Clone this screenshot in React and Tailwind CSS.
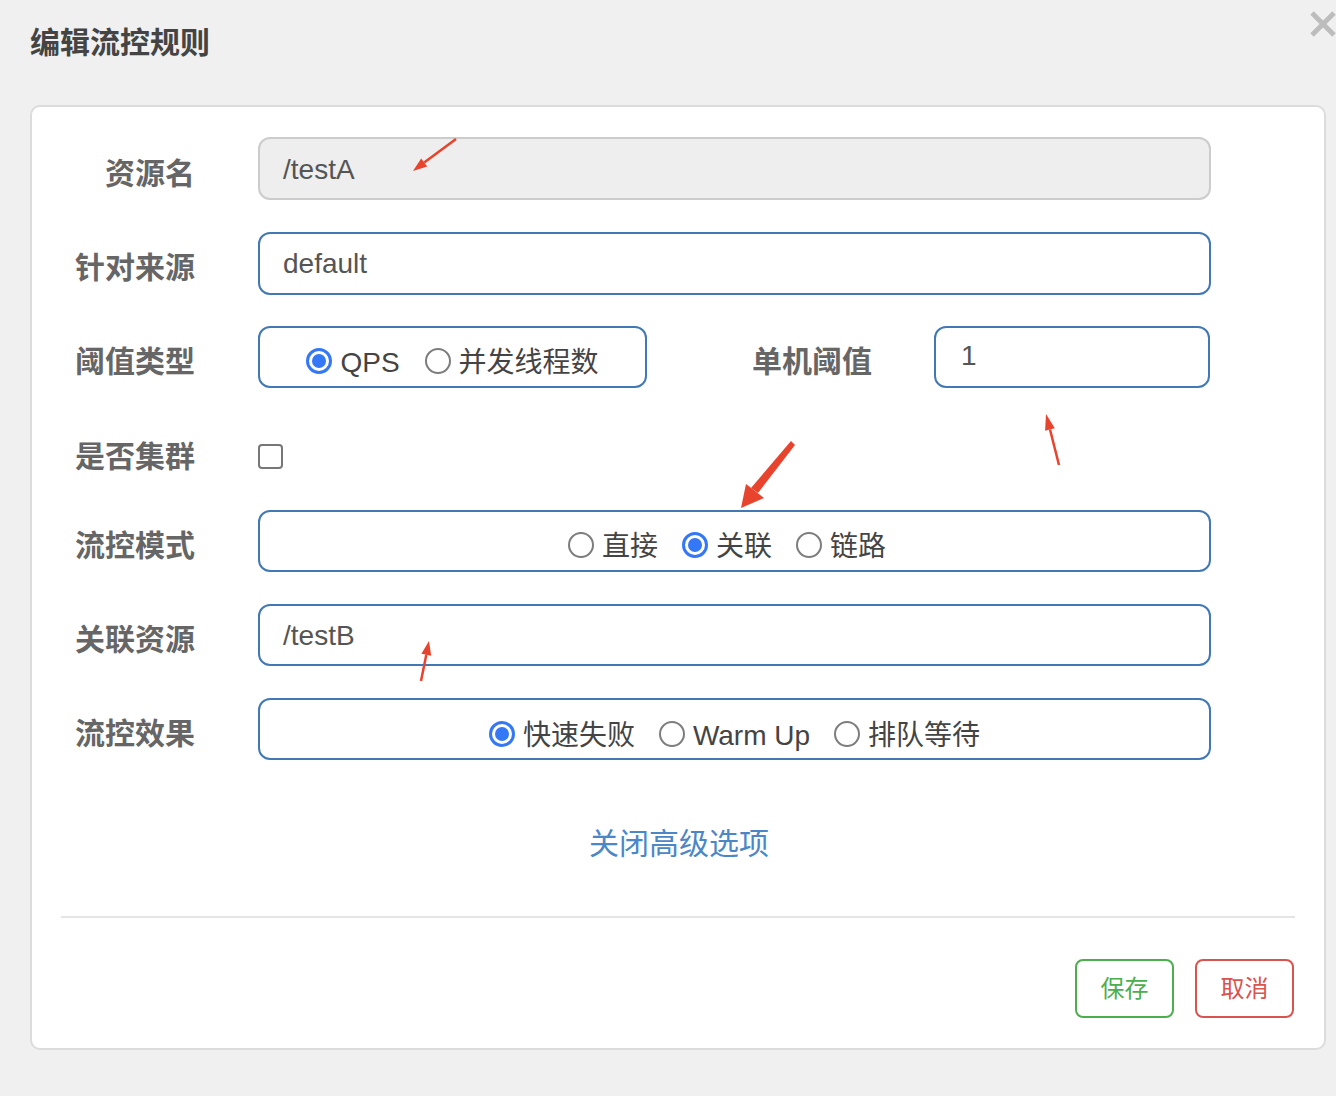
import React from "react";

const FONT = { fontFamily: '"Liberation Sans", "Noto Sans CJK SC", sans-serif' };

function Radio({ checked }) {
  return checked ? (
    <span className="w-[26px] h-[26px] rounded-full border-[3px] border-[#3478f6] flex items-center justify-center shrink-0 bg-white">
      <span className="w-[14px] h-[14px] rounded-full bg-[#3478f6]" />
    </span>
  ) : (
    <span className="w-[26px] h-[26px] rounded-full border-2 border-[#7d7d7d] shrink-0 bg-white" />
  );
}

function RadioItem({ checked, label }) {
  return (
    <span className="flex items-center gap-[8px]">
      <Radio checked={checked} />
      <span className="text-[28px] text-[#444] leading-none pt-[3px]">{label}</span>
    </span>
  );
}

function Label({ children, className = "" }) {
  return (
    <div className={"text-[30px] font-bold text-[#666] leading-none " + className}>{children}</div>
  );
}

function Arrows() {
  const c = "#e8432d";
  return (
    <svg className="absolute inset-0 pointer-events-none" width="1336" height="1096">
      <line x1="456" y1="139" x2="424.2" y2="162.6" stroke={c} strokeWidth="2.5" />
      <polygon points="413,171 427.2,166.6 421.2,158.6" fill={c} />
      <line x1="1059" y1="465" x2="1050" y2="429.5" stroke={c} strokeWidth="2.5" />
      <polygon points="1046,414 1054.8,428.3 1045.1,430.7" fill={c} />
      <polygon points="791,441 795,445 758,493 751,488" fill={c} />
      <polygon points="741,508 764,498 746,484" fill={c} />
      <line x1="421" y1="681" x2="426.3" y2="654.7" stroke={c} strokeWidth="2.5" />
      <polygon points="429,641 431.2,655.7 421.4,653.7" fill={c} />
      <line x1="1312" y1="13" x2="1334" y2="35" stroke="#bdbdbd" strokeWidth="5" />
      <line x1="1334" y1="13" x2="1312" y2="35" stroke="#bdbdbd" strokeWidth="5" />
    </svg>
  );
}

export default function App() {
  return (
    <div className="w-[1336px] h-[1096px] bg-[#f0f0f0] relative overflow-hidden" style={FONT}>
      <div className="h-[105px] pl-[30px] pt-[25px]">
        <div className="text-[30px] font-bold text-[#444] leading-[36px]">编辑流控规则</div>
      </div>

      <div className="ml-[30px] w-[1296px] h-[945px] bg-white border-2 border-[#dcdcdc] rounded-[10px] pt-[30px] flex flex-col">
        {/* 资源名 */}
        <div className="flex items-center h-[63px]">
          <Label className="w-[163px] text-right pt-[11px]">资源名</Label>
          <div className="ml-[63px] w-[953px] h-[63px] bg-[#eeeeee] border-2 border-[#cccccc] rounded-[12px] flex items-center pl-[23px] text-[28px] text-[#555] pt-[2px]">
            /testA
          </div>
        </div>

        {/* 针对来源 */}
        <div className="flex items-center h-[63px] mt-[32px]">
          <Label className="w-[163px] text-right pt-[9px]">针对来源</Label>
          <div className="ml-[63px] w-[953px] h-[63px] border-2 border-[#4279b5] rounded-[12px] flex items-center pl-[23px] text-[28px] text-[#555]">
            default
          </div>
        </div>

        {/* 阈值类型 */}
        <div className="flex items-center h-[62px] mt-[31px]">
          <Label className="w-[163px] text-right pt-[10px]">阈值类型</Label>
          <div className="ml-[63px] w-[389px] h-[62px] border-2 border-[#4279b5] rounded-[12px] flex items-center justify-center gap-[25px] pt-[8px]">
            <RadioItem checked label="QPS" />
            <RadioItem label="并发线程数" />
          </div>
          <Label className="ml-[105px] pt-[10px]">单机阈值</Label>
          <div className="ml-[62px] w-[276px] h-[62px] border-2 border-[#4279b5] rounded-[12px] flex items-center pl-[25px] text-[28px] text-[#555] pb-[2px]">
            1
          </div>
        </div>

        {/* 是否集群 */}
        <div className="flex items-center h-[62px] mt-[37px]">
          <Label className="w-[163px] text-right pt-[2px]">是否集群</Label>
          <div className="ml-[63px] w-[25px] h-[25px] border-2 border-[#777] rounded-[4px] bg-white" />
        </div>

        {/* 流控模式 */}
        <div className="flex items-center h-[62px] mt-[23px]">
          <Label className="w-[163px] text-right pt-[10px]">流控模式</Label>
          <div className="ml-[63px] w-[953px] h-[62px] border-2 border-[#4279b5] rounded-[12px] flex items-center justify-center gap-[24px] pt-[8px] pr-[15px]">
            <RadioItem label="直接" />
            <RadioItem checked label="关联" />
            <RadioItem label="链路" />
          </div>
        </div>

        {/* 关联资源 */}
        <div className="flex items-center h-[62px] mt-[32px]">
          <Label className="w-[163px] text-right pt-[10px]">关联资源</Label>
          <div className="ml-[63px] w-[953px] h-[62px] border-2 border-[#4279b5] rounded-[12px] flex items-center pl-[23px] text-[28px] text-[#555] pt-[2px]">
            /testB
          </div>
        </div>

        {/* 流控效果 */}
        <div className="flex items-center h-[62px] mt-[32px]">
          <Label className="w-[163px] text-right pt-[10px]">流控效果</Label>
          <div className="ml-[63px] w-[953px] h-[62px] border-2 border-[#4279b5] rounded-[12px] flex items-center justify-center gap-[24px] pt-[10px]">
            <RadioItem checked label="快速失败" />
            <RadioItem label="Warm Up" />
            <RadioItem label="排队等待" />
          </div>
        </div>

        <div className="mt-[66px] text-center text-[30px] leading-[36px] text-[#4b86c6] pl-[2px]">关闭高级选项</div>

        <div className="mt-[54px] mx-[29px] h-[2px] bg-[#e5e5e5]" />

        <div className="mt-[41px] flex justify-end gap-[21px] pr-[30px]">
          <button className="w-[99px] h-[59px] border-2 border-[#4cae4c] rounded-[8px] text-[24px] text-[#4cae4c] bg-white" style={FONT}>保存</button>
          <button className="w-[99px] h-[59px] border-2 border-[#d9534f] rounded-[8px] text-[24px] text-[#d9534f] bg-white" style={FONT}>取消</button>
        </div>
      </div>

      <Arrows />
    </div>
  );
}
